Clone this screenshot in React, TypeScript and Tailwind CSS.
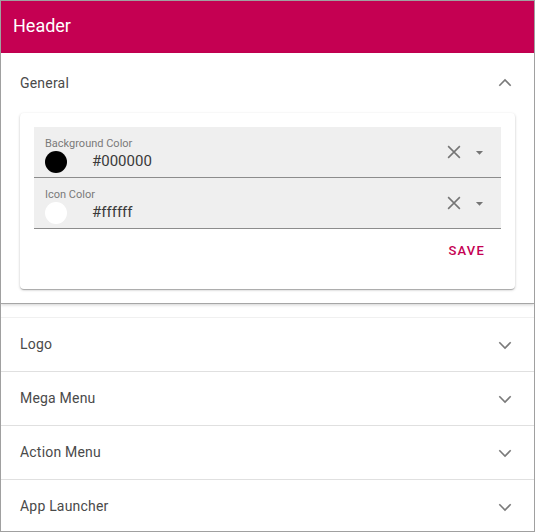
import React from "react";

const Chevron = ({ up = false }: { up?: boolean }) => (
  <svg width="24" height="24" viewBox="0 0 24 24" className={up ? "rotate-180" : ""}>
    <polyline points="6.3,9.3 12,15 17.7,9.3" fill="none" stroke="#7a7a7a" strokeWidth="1.6" />
  </svg>
);

const ClearIcon = () => (
  <svg width="22" height="22" viewBox="0 0 24 24">
    <path d="M5.6 5.6 18.4 18.4 M18.4 5.6 5.6 18.4" fill="none" stroke="#757575" strokeWidth="1.7" />
  </svg>
);

const DropIcon = () => (
  <svg width="17" height="17" viewBox="0 0 24 24">
    <path d="M7 10l5 5 5-5z" fill="#757575" />
  </svg>
);

const ColorField = ({ label, value, color }: { label: string; value: string; color: string }) => (
  <div className="relative h-[51px] bg-[#efefef] border-b border-[#8c8c8c] pl-[11px] pt-[10px] flex">
    <div className="flex-1">
      <div className="text-[11px] leading-[13px] text-[#7a7a7a]">{label}</div>
      <div className="flex items-center mt-[1px]">
        <div className="w-[22px] h-[22px] rounded-full" style={{ backgroundColor: color }} />
        <div className="ml-[25px] text-[15px] leading-[20px] text-[#3a3a3a] -mt-[2px]">{value}</div>
      </div>
    </div>
    <div className="flex items-center pr-[13px] -mt-[10px]">
      <ClearIcon />
      <div className="ml-[6px] flex items-center">
        <DropIcon />
      </div>
    </div>
  </div>
);

const Row = ({ title, first = false }: { title: string; first?: boolean }) => (
  <div
    className={
      "h-[54px] flex items-center justify-between pl-[19px] pr-[17px] " +
      (first ? "border-t border-[#f0f0f0]" : "border-t border-[#e0e0e0]")
    }
  >
    <span className="text-[14px] text-[#4a4a4a] tracking-[0.2px]">{title}</span>
    <Chevron />
  </div>
);

export default function App() {
  return (
    <div
      className="w-[535px] h-[532px] border border-[#a0a0a0] overflow-hidden bg-white"
      style={{ fontFamily: "Roboto, 'Liberation Sans', sans-serif" }}
    >
      <div className="h-[52px] bg-[#c50052] flex items-center pl-[12px] pb-[4px]">
        <span className="text-white text-[18px]">Header</span>
      </div>
      <div className="border-b border-[#a6a6a6] shadow-[0_1px_3px_rgba(0,0,0,0.18)]">
        <div className="h-[60px] flex items-center justify-between pl-[19px] pr-[17px]">
          <span className="text-[14px] text-[#4a4a4a] tracking-[0.2px]">General</span>
          <Chevron up />
        </div>
        <div className="px-[19px] pb-[14px]">
          <div className="rounded-[4px] bg-white shadow-[0_1px_3px_rgba(0,0,0,0.2),0_1px_1px_rgba(0,0,0,0.14),0_2px_1px_-1px_rgba(0,0,0,0.12)] px-[14px] pt-[14px] pb-[20px]">
            <ColorField label="Background Color" value="#000000" color="#000000" />
            <ColorField label="Icon Color" value="#ffffff" color="#ffffff" />
            <div className="flex justify-end mt-[4px]">
              <button className="h-[36px] px-[16px] text-[13px] font-medium tracking-[1.2px] text-[#c50052]">
                SAVE
              </button>
            </div>
          </div>
        </div>
      </div>
      <div className="mt-[13px]">
        <Row title="Logo" first />
        <Row title="Mega Menu" />
        <Row title="Action Menu" />
        <Row title="App Launcher" />
      </div>
    </div>
  );
}
